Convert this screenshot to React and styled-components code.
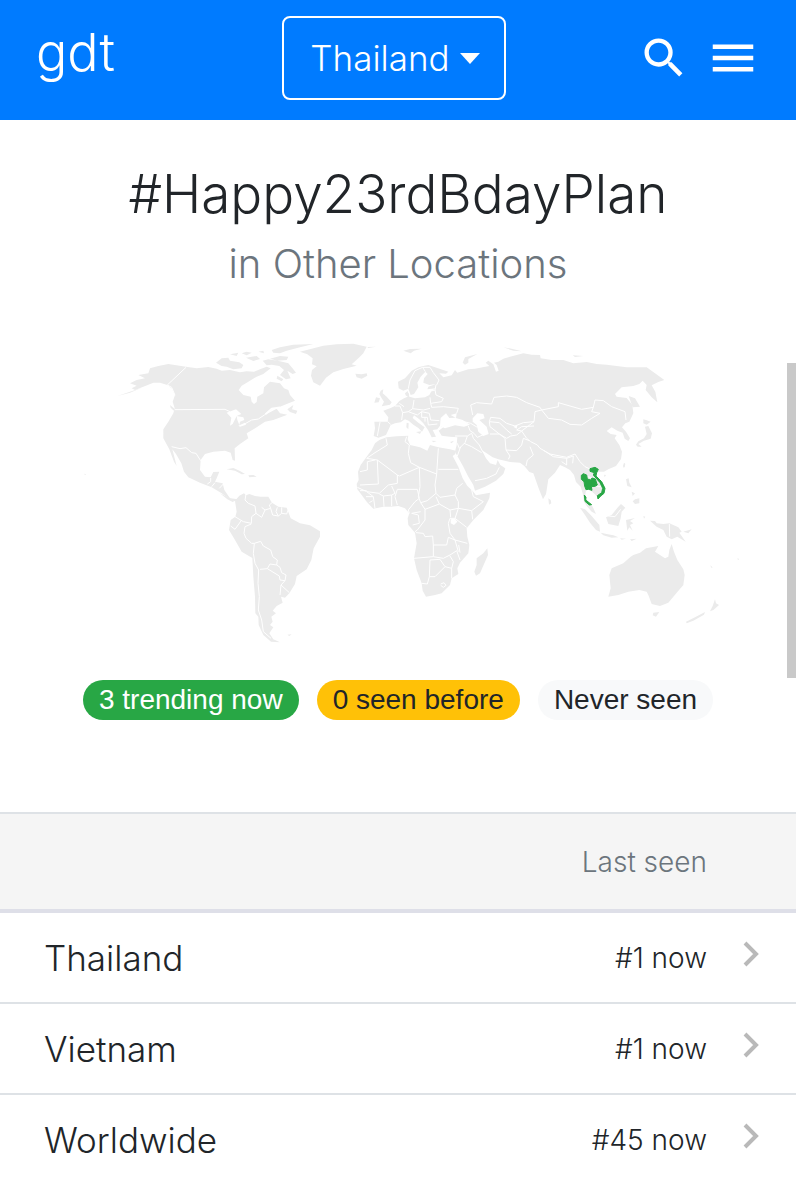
import React, { useState } from "react";
import styled, { createGlobalStyle } from "styled-components";
import { MdMenu, MdSearch } from "react-icons/md";

const locations = [
  { name: "Thailand", lastSeen: "#1 now" },
  { name: "Vietnam", lastSeen: "#1 now" },
  { name: "Worldwide", lastSeen: "#45 now" },
];

const WorldMap = () => (
  <MapSvg viewBox="-1020 30 2388 915" role="img">
    <g transform="translate(-780 0)">
      {/* North America */}
      <path d="M150 160L170 150L195 145L175 135L205 130L210 115L235 108L265 102L318 110L350 115L385 111L410 116L425 122L450 120L480 127L500 124L522 125L540 118L560 110L572 115L550 132L530 140L505 155L485 167L476 180L490 195L512 200L515 215L522 222L530 216L532 200L550 190L552 172L570 155L600 160L612 175L625 180L630 195L645 212L620 222L600 230L575 238L556 254L590 236L600 250L622 254L580 270L555 275L530 292L500 310L505 325L480 342L464 355L465 392L458 390L452 368L435 362L400 365L375 372L362 390L360 420L375 440L392 442L400 426L418 425L410 445L405 455L428 460L433 480L450 505L475 508L465 514L445 505L425 490L395 472L360 458L325 442L312 425L304 400L288 372L277 358L290 408L282 395L268 358L250 325L250 298L265 275L280 250L284 235L278 215L285 195L275 175L262 165L240 158L220 158L190 170L165 180L155 175L170 167Z" />
      <path d="M185 173L150 185L112 198L150 188Z" />
      <path d="M270 225L288 240L285 245L272 233Z" />
      <path d="M622 238L640 225L636 238L652 242L648 252L630 246Z" />
      <path d="M440 418L460 414L480 423L495 432L485 433L465 422ZM505 436L520 435L530 440L508 442ZM13 431L18 433L15 436Z" />
      {/* Arctic islands */}
      <path d="M408 98L425 85L445 83L450 92L478 97L490 105L485 115L460 118L440 110L425 108ZM450 73L475 68L470 78ZM485 70L500 65L515 68L500 76ZM498 83L530 78L540 87L520 93ZM548 92L565 88L600 94L625 100L640 118L648 128L638 132L622 122L632 145L618 148L600 135L612 120L598 108L575 104L560 106ZM570 86L600 78L625 80L620 90L592 92ZM575 60L600 52L640 44L700 42L660 52L620 62L600 70L580 68ZM592 137L610 148L605 154L590 146ZM535 65L550 62L552 70Z" />
      <g className="cut">
        <path d="M318 112L262 165L275 172L285 196M284 239L435 238L450 245M275 350L300 356L318 353L335 368L348 370L362 392M492 283L515 270L535 267L553 255L570 240M382 462L392 455L392 444M405 458L395 470M430 462L418 475" />
        <path d="M556 253L575 236L600 232" strokeWidth="5" />
      </g>
      <path
        className="water"
        d="M440 248L468 238L484 252L470 258L458 282L450 287L454 263ZM470 258L490 262L493 270L480 275L478 285L472 270ZM475 287L495 278L498 284L480 290Z"
      />
    </g>
    {/* Greenland and Iceland */}
    <g transform="translate(-360 15)">
      <path d="M240 50L272 42L310 32L350 28L400 26L440 35L430 55L415 70L395 88L410 92L370 102L340 112L318 128L300 152L280 142L273 122L276 105L290 94L276 88L278 70L262 58ZM442 36L468 35L445 39ZM406 116L425 118L440 115L442 122L425 131L410 127Z" />
    </g>
    {/* South America */}
    <g transform="translate(-420 420)">
      <path d="M105 92L118 77L132 70L138 76L148 72L165 78L182 80L205 80L216 98L235 110L260 113L272 145L300 160L330 166L360 184L360 200L341 235L334 270L320 298L290 318L285 342L268 370L255 383L243 380L248 398L230 408L218 422L228 430L214 440L218 455L210 465L220 472L208 490L220 508L240 517L213 515L190 495L176 465L175 440L166 430L165 380L160 320L157 264L125 245L105 210L87 180L92 150L106 140L110 125L106 100ZM60 70L90 85L105 92L98 96L82 88Z" />
      <path d="M262 494L275 493L268 498ZM176 438L183 445L180 455Z" />
      <g className="cut">
        <path d="M138 72L135 90L145 100L165 108L168 130L155 140L154 160L130 155L105 140M92 168L105 178L125 150M154 162L135 170L132 190L138 205L155 220L163 220L160 250L165 280L176 300L174 340L178 380L175 420L185 450L190 485L213 505M163 220L182 214L190 228L212 240L218 260L232 270L230 285L210 282L202 296L180 298M202 296L225 310L238 318L240 330L255 332L258 315L245 308L240 292L230 285M255 332L243 345L240 375M243 345L268 368M168 130L185 142L195 120L185 112M195 120L212 115L218 135L235 138L245 130L245 112M232 112L228 125L235 138M245 130L260 132L265 118M216 98L208 105L212 115" />
      </g>
    </g>
    {/* Europe and Asia */}
    <path d="M250 108L265 105L285 112L325 125L318 131L298 130L310 142L335 136L345 120L352 128L385 118L405 116L432 111L448 108L437 98L445 92L460 103L468 125L476 122L470 105L462 98L475 95L490 86L510 80L550 70L575 74L600 75L602 85L635 90L670 90L700 100L740 96L770 102L800 104L860 112L920 112L945 130L973 150L955 156L935 166L946 185L952 217L935 202L917 180L920 165L908 152L898 162L880 168L845 172L825 192L830 200L860 204L877 225L880 250L868 275L856 280L846 292L858 305L870 325L865 333L854 326L848 308L832 302L815 292L800 303L812 312L830 315L824 325L838 345L846 365L843 387L828 408L805 418L792 425L775 425L765 435L785 455L796 480L786 498L775 505L764 492L750 480L738 480L735 500L745 515L758 530L768 552L755 545L742 530L732 515L728 490L722 470L708 456L702 435L690 420L675 412L660 405L645 428L625 448L620 480L618 492L609 508L597 478L580 430L568 426L553 408L540 398L510 396L475 388L458 382L440 370L425 360L438 385L450 400L468 405L473 390L481 405L496 415L490 432L468 452L435 470L405 482L400 465L385 440L370 410L352 378L345 365L350 345L352 322L330 320L305 317L296 302L310 292L300 287L292 298L278 300L288 320L275 322L264 300L250 280L238 268L222 256L218 264L235 278L254 292L246 305L235 294L220 284L206 272L195 268L182 277L165 280L152 285L145 300L138 315L115 323L101 318L105 295L103 275L143 275L145 262L130 242L150 235L165 228L178 213L192 205L203 200L195 190L203 183L208 200L225 205L255 202L268 195L275 182L288 175L262 178L265 170L288 162L268 165L250 158L252 145L263 132L256 125L242 140L232 158L235 172L222 192L212 195L205 176L190 182L176 175L174 155L195 145L215 122L235 112Z" />
    <path
      className="water"
      d="M300 288L302 264L318 250L328 264L345 263L368 270L390 284L372 290L345 286L315 295ZM332 255L350 250L348 264ZM398 265L412 250L430 252L434 265L418 270L440 290L446 312L430 318L415 305L410 285L398 275ZM520 290L532 285L530 296Z"
    />
    <path d="M122 182L130 178L128 190L140 200L155 217L150 224L125 229L132 215L125 205L118 192ZM108 202L120 205L116 217L103 218ZM195 190L205 188L208 196L198 198ZM190 62L210 57L245 56L222 62L212 70ZM368 98L375 82L412 72L385 87L385 98L375 104ZM490 52L515 56L545 64L520 62ZM698 76L730 78L705 81ZM228 306L244 304L240 312ZM200 278L206 280L205 298L199 292ZM275 332L290 333L280 337ZM330 336L342 332L335 340Z" />
    <path d="M900 230L885 205L866 198L878 232ZM910 268L918 270L932 275L920 284L910 280ZM915 290L925 288L936 310L932 326L912 332L895 342L905 350L893 350L888 344L895 334L912 325L920 312ZM852 398L856 402L852 415L849 408ZM792 434L798 435L794 442Z" />
    <g className="cut">
      {/* Europe */}
      <path d="M205 176L210 150L225 122L248 112L256 125M248 112L270 112L280 128L297 150L290 165M288 165L285 180L288 195L310 205L305 215L272 220L270 202M285 180L265 185M272 220L275 232L310 230L355 235L350 250M270 235L250 240L218 236L222 210M218 236L205 245L188 248L180 228L165 228M188 248L185 270M205 245L232 255L245 245L268 250L272 270L298 272M245 245L245 262L262 262L265 285L292 282M143 275L152 283M120 276L112 318M178 220L192 230M255 262L255 275" />
      {/* Central and west Asia */}
      <path d="M398 255L392 225L410 218L455 222L462 202L500 198L530 202L560 218L600 232L605 240M605 240L630 235L655 230L655 218L690 228L725 238L760 232L765 210L790 212L815 230L855 245L858 270M605 240L625 265L665 270L690 283L725 285L755 265L780 250L755 245L760 232M605 240L585 245L582 275L550 278L525 288L500 280L480 265L452 262L448 275L478 278L500 300L515 312M448 275L450 290L478 312L500 325L512 318L530 315L545 303L530 300L545 290L582 288M582 275L545 303L560 325L572 335L592 345L600 355L630 372L680 382L705 372L720 395M450 312L478 312L495 325L498 360L510 378L505 388M498 360L530 362L545 345L550 325L568 332M570 350L580 375L562 390L558 408M612 362L640 380L680 385L680 405L665 395M680 385L700 378L698 400M720 395L735 410L752 418M385 288L390 302L402 310L412 322L435 312M345 318L382 318L395 310L400 325L418 345L428 365M382 318L375 338L358 355L352 340M372 340L395 350L425 368M352 378L362 350M405 452L440 445L468 432L478 412M360 272L392 280L412 292M725 430L740 445L735 460M745 440L765 450L772 470L790 470" />
    </g>
    {/* Africa */}
    <g transform="translate(0 300)">
      <path d="M118 30L140 22L170 19L205 17L203 28L210 45L240 52L262 62L270 45L295 52L330 58L347 62L346 72L338 78L355 110L368 145L382 168L400 185L408 196L450 188L448 205L430 240L400 270L380 295L382 320L388 345L385 370L360 398L352 415L355 432L335 445L330 465L305 490L285 495L258 500L248 482L245 460L230 420L222 385L230 340L225 308L205 285L203 265L208 250L195 235L175 228L150 230L130 230L100 236L80 215L65 195L52 178L50 162L56 150L54 125L62 105L80 80L95 60L105 40ZM442 355L444 375L420 430L408 437L403 425L410 405L410 385L430 370Z" />
      <g className="cut">
        <path d="M138 25L142 45L105 68L80 85L112 90L172 135L178 138L238 112L212 98L205 70L208 45L195 35L200 20M112 90L115 162L60 165M60 125L82 120L82 95L105 90M172 135L172 160L145 165L118 190L80 185L52 172M238 112L290 132L295 55M295 118L355 118M290 132L285 165L288 190L262 212L242 218L235 200L240 170L238 112M172 178L232 178L238 205L225 215L205 240L208 250M172 178L165 200L172 225M155 168L165 190L155 195L155 228M130 198L132 230M130 198L118 192M130 198L155 195M100 200L105 235M78 200L100 200L80 185M60 182L80 182M88 218L98 212M288 190L300 202L345 195L350 175L368 160M345 195L355 215L355 235L330 240L298 222L288 200M298 222L255 238L242 218M355 235L395 242L430 215L400 200L395 180M395 242L398 268M355 235L345 265L380 292M345 265L330 265L325 280L330 310L345 330L382 340M330 240L332 262M255 238L255 270L232 300L225 305M242 245L215 250L235 255L238 280L218 285M228 308L250 310L255 320L278 318L280 345L320 345L325 322L345 330L355 365M280 345L280 380L222 385M280 380L310 385L330 375L350 362L360 390M270 390L268 440L262 462L245 460M270 390L300 388L315 410L285 440L268 440M315 410L335 415L340 395L330 378M335 415L335 445M356 345L360 368M302 462L312 458L318 466L310 472L302 466" />
      </g>
      <path className="water" d="M332 268L345 266L352 275L342 285L332 280Z" />
    </g>
    {/* Southeast Asia and Oceania */}
    <g transform="translate(600 330)">
      <path d="M25 175L32 180L34 190L27 194ZM120 203L135 208L155 228L178 255L180 275L168 270L150 248L135 225ZM182 278L200 282L220 286L235 292L215 293L190 286ZM198 232L215 225L235 200L243 192L256 203L245 215L242 235L235 258L205 252ZM258 240L285 234L270 243L280 250L270 255L278 272L268 262L262 272ZM258 118L266 115L268 128L275 142L262 138ZM285 178L298 175L298 190L285 192L278 184ZM275 155L285 160L278 168ZM255 70L254 82L250 78ZM310 228L316 230L312 236ZM330 242L345 243L350 250L370 252L388 250L415 262L425 275L418 278L437 305L412 290L395 298L380 290L370 270L350 260ZM430 275L455 268L445 280ZM240 295L258 296L245 299ZM270 298L290 296L275 303Z" />
      <path d="M395 312L402 335L412 360L430 388L434 405L430 435L410 458L385 488L360 498L335 492L325 465L320 455L298 450L265 455L235 465L205 470L212 445L208 405L215 385L250 370L272 350L280 345L300 338L318 325L355 318L345 335L375 355L385 350L388 330ZM340 518L358 516L348 530L338 526ZM525 478L528 490L537 495L520 510L510 514L518 498ZM495 516L492 524L460 542L440 550L438 545L465 532ZM510 376L518 382L515 384ZM592 355L598 357L594 360Z" />
      <path className="cut" d="M388 252L389 290M205 228L225 230L242 208" />
      <path
        className="trending"
        d="M130 101L140 105L142 117L152 120L156 114L166 117L172 135L165 139L154 140L156 151L146 148L138 149L134 138L132 125L124 118L124 106Z"
      />
      <path
        className="trending"
        d="M150 86L165 82L175 88L170 98L168 108L185 125L195 145L192 160L182 168L174 177L172 167L185 158L188 145L180 128L160 105L163 98L150 94ZM133 165L138 172L137 180L155 194L148 195L135 184Z"
      />
    </g>
  </MapSvg>
);

const App = () => {
  const [location, setLocation] = useState("Thailand");

  return (
    <Page>
      <GlobalStyle />
      <Header>
        <Brand href="#">gdt</Brand>
        <LocationBox>
          <LocationSelect
            aria-label="Location"
            value={location}
            onChange={(e) => setLocation(e.target.value)}
          >
            {locations.map(({ name }) => (
              <option key={name}>{name}</option>
            ))}
          </LocationSelect>
          <Caret viewBox="0 0 20 11">
            <path d="M0 0H20L10 11Z" />
          </Caret>
        </LocationBox>
        <HeaderActions>
          <IconButton aria-label="Search">
            <MdSearch size={52} />
          </IconButton>
          <IconButton aria-label="Menu">
            <MdMenu size={54} />
          </IconButton>
        </HeaderActions>
      </Header>

      <main>
        <Title>#Happy23rdBdayPlan</Title>
        <SubTitle>in Other Locations</SubTitle>
        <WorldMap />
        <Legend>
          <Badge $bg="#28a745" $color="#fff">
            3 trending now
          </Badge>
          <Badge $bg="#ffc107">0 seen before</Badge>
          <Badge $bg="#f8f9fa">Never seen</Badge>
        </Legend>

        <Table>
          <thead>
            <tr>
              <HeadCell />
              <HeadCell scope="col">Last seen</HeadCell>
              <HeadCell />
            </tr>
          </thead>
          <tbody>
            {locations.map(({ name, lastSeen }) => (
              <Row key={name}>
                <NameCell>
                  <a href={`#${name}`}>{name}</a>
                </NameCell>
                <SeenCell>{lastSeen}</SeenCell>
                <ArrowCell>
                  <Chevron viewBox="0 0 18 26">
                    <path d="M2 2L13 13L2 24" />
                  </Chevron>
                </ArrowCell>
              </Row>
            ))}
          </tbody>
        </Table>
      </main>
      <ScrollThumb />
    </Page>
  );
};

export default App;

const GlobalStyle = createGlobalStyle`
  * {
    box-sizing: border-box;
  }
  body {
    margin: 0;
    background: #fff;
    color: #212529;
    font-family: Inter, "Liberation Sans", sans-serif;
    font-weight: 300;
  }
  a {
    color: inherit;
    text-decoration: none;
  }
  ::-webkit-scrollbar {
    display: none;
  }
`;

const Page = styled.div`
  width: 100%;
`;

const Header = styled.header`
  display: grid;
  grid-template-columns: 1fr auto 1fr;
  align-items: center;
  height: 120px;
  padding: 0 36px 4px 28px;
  background: #007bff;
  color: #fff;
`;

const Brand = styled.a`
  padding: 0 8px 10px;
  font-size: 52px;
  line-height: 60px;
`;

const LocationBox = styled.div`
  position: relative;
`;

const LocationSelect = styled.select`
  appearance: none;
  field-sizing: content;
  display: block;
  height: 84px;
  padding: 0 54px 0 26px;
  border: 2px solid #fff;
  border-radius: 8px;
  background: transparent;
  color: inherit;
  font: inherit;
  font-size: 35px;

  option {
    color: #212529;
  }
`;

const Caret = styled.svg`
  position: absolute;
  top: 37px;
  right: 26px;
  width: 20px;
  height: 11px;
  fill: #fff;
  pointer-events: none;
`;

const HeaderActions = styled.div`
  display: flex;
  align-items: center;
  justify-content: flex-end;
  gap: 16px;
`;

const IconButton = styled.button`
  display: flex;
  padding: 0;
  border: 0;
  background: none;
  color: inherit;
`;

const Title = styled.h1`
  margin: 40px 0 0;
  font-size: 53px;
  font-weight: 300;
  line-height: 68px;
  text-align: center;
`;

const SubTitle = styled.h2`
  margin: 8px 0 48px;
  color: #6c757d;
  font-size: 40px;
  font-weight: 300;
  line-height: 56px;
  text-align: center;
`;

const MapSvg = styled.svg`
  display: block;
  width: 100%;
  fill: #ebebeb;

  .cut {
    fill: none;
    stroke: #fff;
    stroke-width: 3;
    stroke-linejoin: round;
  }
  .water {
    fill: #fff;
  }
  .trending {
    fill: #28a745;
    stroke: #28a745;
    stroke-width: 3;
    stroke-linejoin: round;
  }
`;

const Legend = styled.div`
  display: flex;
  justify-content: center;
  gap: 18px;
  padding: 35px 0 92px;
`;

const Badge = styled.span`
  height: 40px;
  padding: 0 16px;
  border-radius: 20px;
  background: ${({ $bg }) => $bg};
  color: ${({ $color }) => $color || "#212529"};
  font-family: "Liberation Sans", sans-serif;
  font-size: 28px;
  font-weight: 400;
  line-height: 40px;
`;

const Table = styled.table`
  width: 100%;
  border-collapse: separate;
  border-spacing: 0;
`;

const HeadCell = styled.th`
  height: 101px;
  padding: 0;
  border-top: 2px solid #dee2e6;
  border-bottom: 4px solid #dedfe8;
  background: #f5f5f5;
  color: #6c757d;
  font-size: 28px;
  font-weight: 300;
  text-align: right;
`;

const Row = styled.tr`
  td {
    border-bottom: 2px solid #dee2e6;
  }
  &:last-child td {
    border-color: transparent;
  }
`;

const Cell = styled.td`
  height: 91px;
  padding: 0;
`;

const NameCell = styled(Cell)`
  padding-left: 44px;
  font-size: 35px;
`;

const SeenCell = styled(Cell)`
  font-size: 28px;
  text-align: right;
`;

const ArrowCell = styled(Cell)`
  width: 89px;
  padding: 0 0 8px 36px;
`;

const Chevron = styled.svg`
  display: block;
  width: 18px;
  height: 26px;
  fill: none;
  stroke: #b9b9b9;
  stroke-width: 4;
`;

const ScrollThumb = styled.div`
  position: fixed;
  top: 363px;
  right: 0;
  width: 9px;
  height: 315px;
  background: #c9c9c9;
`;
